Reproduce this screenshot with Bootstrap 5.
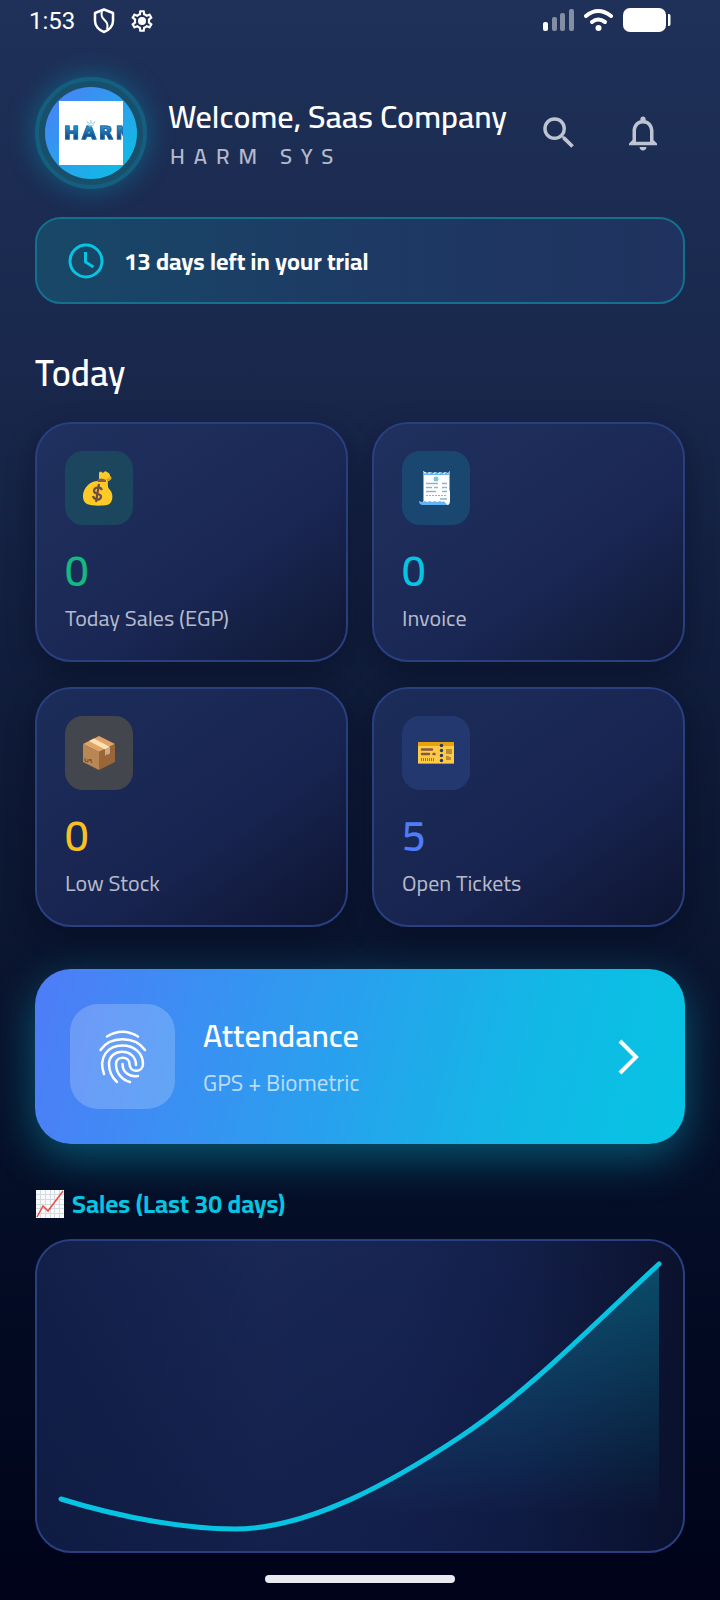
<!DOCTYPE html>
<html lang="en">
<head>
<meta charset="utf-8">
<meta name="viewport" content="width=device-width, initial-scale=1">
<title>Harm Sys – Dashboard</title>
<link href="https://cdn.jsdelivr.net/npm/bootstrap@5.3.0/dist/css/bootstrap.min.css" rel="stylesheet">
<style>
  :root { --cyan: #06c4e2; --soft: #b4bacb; --edge: #293f80; }
  body {
    font-family: Cairo, Roboto, "Liberation Sans", sans-serif;
    color: #fff;
    background: linear-gradient(180deg, #1f3159 0%, #18264a 26%, #0f1b38 45%, #0a142e 62%, #030c24 80%, #000319 100%);
  }
  .gutter { padding-left: 35px; padding-right: 35px; }
  .status-bar { height: 42px; padding: 0 49px 0 29px; font: 24px/42px Roboto, sans-serif; }
  .status-icons { gap: 14px; margin-left: 18px; }
  .app-header { margin-top: 35px; }
  .avatar-ring {
    width: 112px; height: 112px; border: 4px solid #145f80; background: #18506c;
    box-shadow: 0 0 28px rgba(6,182,212,.38);
  }
  .avatar { width: 92px; height: 92px; background: linear-gradient(135deg, #4f7cf8, #06c4e2); }
  .logo-tile { width: 64px; height: 64px; padding-left: 5px; background: #fff; }
  .logo-word {
    font: bold 18px/18px "DejaVu Sans", sans-serif; letter-spacing: 3px;
    -webkit-text-stroke: 1px #1f6cab;
    background: linear-gradient(180deg, #2f9fd0 10%, #143a7c 80%); -webkit-background-clip: text;
    background-clip: text; color: transparent;
  }
  .logo-crown { top: 19px; left: 27px; }
  .greeting { margin-left: 21px; padding-top: 2px; }
  .welcome { font-size: 32px; line-height: 40px; font-weight: 600; }
  .company { margin-top: 4px; font-size: 22px; line-height: 32px; font-weight: 600; letter-spacing: 9px; color: var(--soft); padding-left: 2px; }
  .icon-btn { width: 48px; height: 48px; color: #bfc4d2; background: none; border: 0; }
  .actions { gap: 36px; margin-right: 18px; }
  .trial {
    margin-top: 28px; min-height: 87px; padding: 0 31px; gap: 20px; border: 2px solid #14708d; border-radius: 26px;
    background: linear-gradient(90deg, #184868, #1d3a64 50%, #20325f); font-size: 24px; font-weight: 700;
  }
  .trial span { padding-top: 3px; }
  .today-title { margin: 47px 0 27px; font-size: 36px; line-height: 44px; font-weight: 600; }
  .stats { display: grid; grid-template-columns: 1fr 1fr; gap: 25px 24px; }
  .panel {
    border: 2px solid var(--edge); border-radius: 36px;
    background: linear-gradient(145deg, #20315f 0%, #1a2754 60%, #0f1733 100%);
    box-shadow: 0 10px 28px rgba(2,8,26,.4);
  }
  .stat { padding: 27px 28px; min-height: 240px; }
  .stat.lower { background: linear-gradient(145deg, #1c2d5a 0%, #182450 60%, #0d1430 100%); }
  .tile { width: 68px; height: 74px; border-radius: 18px; }
  .tile.green { background: #1b465e; }
  .tile.cyan { background: #19476f; }
  .tile.amber { background: #44464d; }
  .tile.indigo { background: #22386f; }
  .figure-no { margin-top: 21px; font-size: 42px; line-height: 50px; font-weight: 600; }
  .caption { margin-top: 7px; font-size: 22px; line-height: 30px; font-weight: 400; color: #b4bacb; }
  .attendance {
    margin-top: 42px; min-height: 175px; padding: 35px; gap: 28px; border: 0; border-radius: 36px; color: #fff;
    background: linear-gradient(105deg, #4f7cf8 0%, #2a9fee 45%, #12b8e5 75%, #06c4e2 100%);
    box-shadow: 0 14px 44px rgba(6,182,212,.42);
  }
  .finger { width: 105px; height: 105px; border-radius: 28px; background: rgba(255,255,255,.2); }
  .att-text { padding-bottom: 1px; }
  .att-title { font-size: 32px; line-height: 44px; font-weight: 600; }
  .att-sub { margin-top: 10px; font-size: 23px; line-height: 32px; font-weight: 400; color: #b9dcfa; }
  .sales-title { margin: 42px 1px 17px; gap: 8px; font-size: 25px; line-height: 36px; font-weight: 700; color: var(--cyan); }
  .chart-panel {
    background: linear-gradient(0deg, rgba(4,12,46,.25), rgba(4,12,46,0)), linear-gradient(90deg, #122049 0%, #182754 35%, #172553 55%, #131f49 75%, #0b122d 100%);
    box-shadow: none;
  }
  .home-bar { margin: 22px auto 17px; width: 190px; height: 8px; background: #e9eaf1; }
</style>
</head>
<body>

<div class="status-bar d-flex align-items-center">
  <span>1:53</span>
  <span class="status-icons d-flex align-items-center">
    <svg width="22" height="26" viewBox="0 0 22 26" fill="none" stroke="#fff" stroke-width="2.500" stroke-linejoin="round"><path d="M11 1.500 20 5v8c0 5-4 9.500-9 11-5-1.500-9-6-9-11V5z"/><path d="M9 3c-3 10 8 8 5 18" stroke-width="2"/></svg>
    <svg width="26" height="26" viewBox="0 0 24 24" fill="#fff"><path d="M19.430 12.980c.04-.32.07-.64.07-.98s-.03-.66-.07-.98l2.110-1.650c.19-.15.24-.42.12-.64l-2-3.460c-.09-.16-.26-.25-.44-.25-.06 0-.12.01-.17.03l-2.490 1c-.52-.4-1.080-.73-1.690-.98l-.38-2.650C14.460 2.180 14.250 2 14 2h-4c-.25 0-.46.18-.49.42l-.38 2.650c-.61.25-1.170.59-1.690.98l-2.490-1c-.06-.02-.12-.03-.18-.03-.17 0-.34.09-.43.25l-2 3.460c-.13.22-.07.49.12.64l2.110 1.650c-.04.32-.07.65-.07.98s.03.66.07.98l-2.110 1.650c-.19.15-.24.42-.12.64l2 3.460c.09.16.26.25.44.25.06 0 .12-.01.17-.03l2.490-1c.52.4 1.080.73 1.690.98l.38 2.650c.03.24.24.42.49.42h4c.25 0 .46-.18.49-.42l.38-2.650c.61-.25 1.170-.59 1.690-.98l2.490 1c.06.02.12.03.18.03.17 0 .34-.09.43-.25l2-3.460c.12-.22.07-.49-.12-.64zm-1.980-1.710c.04.31.05.52.05.73s-.02.43-.05.73l-.14 1.130.89.7 1.080.84-.7 1.210-1.270-.51-1.040-.42-.9.68c-.43.32-.84.56-1.250.73l-1.060.43-.16 1.130-.2 1.350h-1.400l-.35-2.480-1.060-.43c-.43-.18-.83-.41-1.230-.71l-.91-.7-1.060.43-1.270.51-.7-1.210 1.970-1.540-.14-1.130c-.03-.31-.05-.54-.05-.74s.02-.43.05-.73l.14-1.130-1.970-1.540.7-1.210 2.330.93.9-.68c.43-.32.84-.56 1.250-.73l1.060-.43.36-2.480h1.390l.35 2.480 1.060.43c.43.18.83.41 1.230.71l.91.7 2.330-.94.7 1.210-1.970 1.550z"/><circle cx="12" cy="12" r="3.700"/></svg>
  </span>
  <svg class="ms-auto" width="128" height="26" viewBox="0 0 128 26" fill="#fff"><rect x="0" y="14" width="5" height="9" rx="2"/><g opacity=".45"><rect x="9" y="9" width="5" height="14" rx="2"/><rect x="17" y="5" width="5" height="18" rx="2"/><rect x="26" y="1" width="5" height="22" rx="2"/></g><g fill="none" stroke="#fff" stroke-width="4" stroke-linecap="round"><path d="M43 8q12-10 25 0"/><path d="M49 14q6-5 13 0"/></g><circle cx="55.500" cy="20" r="3"/><rect x="80" y="0" width="43" height="24" rx="7"/><path d="M125 6h1q1.500 0 1.500 2v8q0 2-1.500 2h-1z"/></svg>
</div>

<main class="gutter">
  <header class="app-header d-flex align-items-center">
    <div class="avatar-ring rounded-circle d-flex align-items-center justify-content-center flex-shrink-0">
      <div class="avatar rounded-circle d-flex align-items-center justify-content-center">
        <div class="logo-tile position-relative overflow-hidden d-flex align-items-center">
          <span class="logo-word">HARM</span>
          <svg class="logo-crown position-absolute" width="10" height="7" viewBox="0 0 10 7" fill="none" stroke="#b5dcec"><path d="M1 1l2 5h4l2-5-3 3-1-4-1 4z"/></svg>
        </div>
      </div>
    </div>
    <div class="greeting">
      <h1 class="welcome text-nowrap mb-0">Welcome, Saas Company</h1>
      <div class="company text-nowrap">HARM SYS</div>
    </div>
    <div class="actions d-flex ms-auto">
      <button class="icon-btn p-0 d-flex align-items-center justify-content-center" type="button" aria-label="Search"><svg width="42" height="42" viewBox="0 0 24 24" fill="currentColor"><path d="M15.500 14h-.79l-.28-.27A6.470 6.470 0 0 0 16 9.500 6.500 6.500 0 1 0 9.500 16c1.610 0 3.090-.59 4.230-1.570l.27.28v.79l5 4.990L20.490 19l-4.990-5zm-6 0C7.010 14 5 11.990 5 9.500S7.010 5 9.500 5 14 7.010 14 9.500 11.990 14 9.500 14z"/></svg></button>
      <button class="icon-btn p-0 d-flex align-items-center justify-content-center" type="button" aria-label="Notifications"><svg width="42" height="42" viewBox="0 0 24 24" fill="currentColor"><path d="M12 22c1.100 0 2-.9 2-2h-4c0 1.100.89 2 2 2zm6-6v-5c0-3.070-1.640-5.640-4.500-6.320V4c0-.83-.67-1.500-1.500-1.500s-1.500.67-1.500 1.500v.68C7.630 5.360 6 7.920 6 11v5l-2 2v1h16v-1l-2-2zm-2 1H8v-6c0-2.480 1.510-4.500 4-4.500s4 2.020 4 4.500v6z"/></svg></button>
    </div>
  </header>

  <div class="trial d-flex align-items-center" role="status">
    <svg width="36" height="36" viewBox="0 0 36 36" fill="none" stroke="#06c4e2" stroke-width="3"><circle cx="18" cy="18" r="16"/><path d="M17.500 9v10l8 5"/></svg>
    <span>13 days left in your trial</span>
  </div>

  <h2 class="today-title">Today</h2>

  <section class="stats">
    <div class="panel stat">
      <div class="tile green d-flex align-items-center justify-content-center"><svg width="36" height="36" viewBox="0 0 36 36"><path d="M18 3q1-3 4 0 2-3 4-1 3 1 3 4 3 2 0 4l-6 2h-5z" fill="#ffca28"/><path d="M29 6q-1 3-5 3l-2 3 6-1q3-2 1-5z" fill="#e5a01d"/><path d="M17 11 25 9l2 3q-1 5 2 8c4 4 3 14-3 15-6 1-15 1-20-1C0 31 1 20 7 15q4-4 10-4z" fill="#ffca28"/><path d="M16 10q4-3 9 0v2h-8z" fill="#8d5a45"/><path d="M21 20c-2-4-8-3-8 1 0 4 8 2 7 6-1 4-7 3-8-1M18 14l-3 18" fill="none" stroke="#6d4c41" stroke-width="2.200"/></svg></div>
      <div class="figure-no" style="color:#12b981">0</div>
      <div class="caption">Today Sales (EGP)</div>
    </div>
    <div class="panel stat">
      <div class="tile cyan d-flex align-items-center justify-content-center"><svg width="36" height="36" viewBox="0 0 36 36"><path d="M5 1v31h27V1l-2 2-3-1-2 1-3-1-2 1-3-1-2 1-3-1-3 1-2-1z" fill="#fff"/><path d="M5 1l2 3 2-2 2 2 2-2 3 2 2-2 3 2 2-2 3 2 2-2 2 2 2-3v29h-1V5H6v26H5z" fill="#64b5f6"/><path d="M1 31q0 4 4 4h25q-3-1-4-4l-2 1-2-1-3 1-2-1-3 1-2-1-3 1-2-1-3 1z" fill="#64b5f6"/><path d="M26 31q2 4 4 4 2-1 2-4V20z" fill="#fff"/><circle cx="18" cy="9" r="2.500" fill="#80c5d9"/><path d="M8 13.500h12M24 13.500h5M8 17.500h6M16 17.500h4M24 17.500h5M8 21.500h10M24 21.500h5M22 29h7" stroke="#90b5c5" stroke-width="1.500"/><path d="M8 25.500h21" stroke="#90b5c5" stroke-dasharray="2 1"/></svg></div>
      <div class="figure-no" style="color:#06c4e2">0</div>
      <div class="caption">Invoice</div>
    </div>
    <div class="panel stat lower">
      <div class="tile amber d-flex align-items-center justify-content-center"><svg width="36" height="36" viewBox="0 0 36 36"><path d="M18 1 34 9 18 17 2 9z" fill="#e0a368"/><path d="M2 9l16 8v18L2 27z" fill="#b98753"/><path d="M34 9l-16 8v18l16-8z" fill="#996539"/><path d="M13 3.500 29 12l-5 2.500L8 6z" fill="#ffe0b2"/><path d="M24 14.500 29 12v6l-2 2-1-1-2 2z" fill="#cbab8e"/><path d="M4 23v3l3 1v-3M9 24l2 4M8 25l3 0" fill="none" stroke="#6e4d2e"/></svg></div>
      <div class="figure-no" style="color:#fbbf24">0</div>
      <div class="caption">Low Stock</div>
    </div>
    <div class="panel stat lower">
      <div class="tile indigo d-flex align-items-center justify-content-center"><svg width="36" height="36" viewBox="0 0 36 36"><rect x="0" y="7" width="36" height="22" fill="#ffca45"/><path d="M0 7h36v4H0z" fill="#e7a20d"/><path d="M0 28h36v1H0z" fill="#c98d25"/><path d="M4 14.500h10M4 19h7M15.500 19h1" stroke="#84583e" stroke-width="2.500" stroke-linecap="round"/><path d="M3 24.500h13" stroke="#9b7440" stroke-width="3" stroke-dasharray="1 1"/><path d="M28 14h6v5h-6zM28 21h3v1h2v3h-5z" fill="#b58b3f"/><g fill="#22386f"><circle cx="23.500" cy="10.500" r="1.700"/><circle cx="23.500" cy="15.500" r="1.700"/><circle cx="23.500" cy="20.500" r="1.700"/><circle cx="23.500" cy="25.500" r="1.700"/></g></svg></div>
      <div class="figure-no" style="color:#4f7cf8">5</div>
      <div class="caption">Open Tickets</div>
    </div>
  </section>

  <button class="attendance w-100 d-flex align-items-center text-start" type="button">
    <span class="finger d-flex align-items-center justify-content-center flex-shrink-0"><svg width="62" height="66" viewBox="0 0 62 66" fill="none" stroke="#fff" stroke-width="2.500" stroke-linecap="round"><path d="M15 12.500Q30.500 3 46 12.500M8.500 26C18 11.500 43 11.500 53 26M12 50C6 33 16 21.500 30.500 21.500 42 21.500 51 29 51 40 51 49 37.500 49 37.500 40 37.500 31.500 24 31.500 24 40 24 50 31 56.500 38 58M44 41C44 23.500 17 23.500 17 40c0 8 3 13.500 8 18M30.500 40C30.500 48 37 53.500 46 52"/></svg></span>
    <span class="att-text flex-grow-1">
      <span class="att-title d-block">Attendance</span>
      <span class="att-sub d-block">GPS + Biometric</span>
    </span>
    <svg class="me-2" width="24" height="36" viewBox="0 0 24 36" fill="none" stroke="#fff" stroke-width="4"><path d="M2 2l16 16L2 34"/></svg>
  </button>

  <h2 class="sales-title d-flex align-items-center"><svg width="28" height="28" viewBox="0 0 28 28"><path d="M0 0h28v28H0z" fill="#f8fafb"/><path d="M4.500 0v28M9.500 0v28M14.500 0v28M18.500 0v28M23.500 0v28M0 4.500h28M0 9.500h28M0 14.500h28M0 18.500h28M0 23.500h28" stroke="#d2dce2"/><path d="M1 27 7 16l5 5L27 1" fill="none" stroke="#ef4b43" stroke-width="1.500"/></svg>Sales (Last 30 days)</h2>

  <section class="panel chart-panel">
    <svg class="d-block w-100" viewBox="2 2 646 310" role="img" aria-label="Sales over the last 30 days">
      <defs><linearGradient id="area" x1="0" y1="25" x2="0" y2="275" gradientUnits="userSpaceOnUse"><stop offset="0" stop-color="#06c4e2" stop-opacity=".32"/><stop offset="1" stop-color="#06c4e2" stop-opacity="0"/></linearGradient></defs>
      <path d="M26 260C90 280 155 290 200 290C275 290 360 241 425 198C492 154 557 87 624 25V290H26z" fill="url(#area)"/>
      <path d="M26 260C90 280 155 290 200 290C275 290 360 241 425 198C492 154 557 87 624 25" fill="none" stroke="#06c4e2" stroke-width="5" stroke-linecap="round"/>
    </svg>
  </section>
</main>

<div class="home-bar rounded-pill"></div>

<script src="https://cdn.jsdelivr.net/npm/bootstrap@5.3.0/dist/js/bootstrap.bundle.min.js"></script>
</body>
</html>
